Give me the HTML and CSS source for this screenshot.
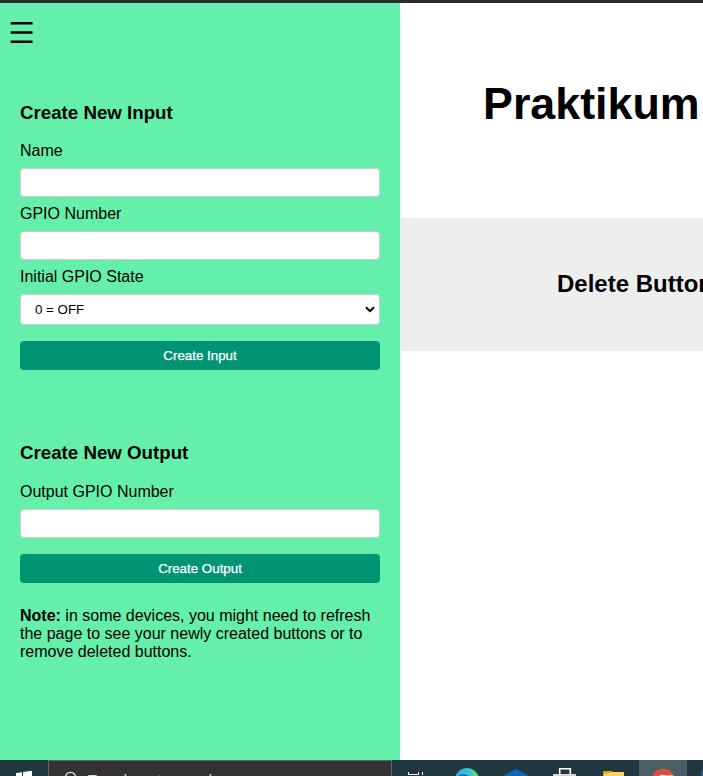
FILE: index.html
```html
<!DOCTYPE html>
<html lang="en">
<head>
<meta charset="utf-8">
<title>Praktikum</title>
<link rel="stylesheet" href="styles.css">
</head>
<body>
<div class="browser-edge"></div>
<div class="page">
  <aside class="sidebar">
    <button class="menu" aria-label="Menu">
      <svg width="24" height="24" viewBox="0 0 24 24"><path d="M.7 2.3h21.8M.7 11.5h21.8M.7 20.7h21.8" stroke="#000" stroke-width="2.5"/></svg>
    </button>
    <form class="form">
      <h3>Create New Input</h3>
      <label for="name">Name</label>
      <input type="text" id="name">
      <label for="gpio">GPIO Number</label>
      <input type="text" id="gpio">
      <label for="state">Initial GPIO State</label>
      <div class="select" id="state">
        <span>0 = OFF</span>
        <svg width="10" height="7" viewBox="0 0 10 7"><path d="M1 1.2l4 4 4-4" fill="none" stroke="#000" stroke-width="2"/></svg>
      </div>
      <button type="button" class="submit">Create Input</button>
    </form>
    <form class="form output">
      <h3>Create New Output</h3>
      <label for="out">Output GPIO Number</label>
      <input type="text" id="out">
      <button type="button" class="submit">Create Output</button>
      <p><b>Note:</b> in some devices, you might need to refresh the page to see your newly created buttons or to remove deleted buttons.</p>
    </form>
  </aside>
  <main class="main">
    <h1>Praktikum</h1>
    <section class="panel"><h2>Delete Button</h2></section>
  </main>
</div>
<footer class="taskbar">
  <div class="start"><svg width="48" height="16" viewBox="0 0 48 16"><path d="M16 13.1l6-.9V16h-6zM23 12l9-1.3V16h-9z" fill="#fff"/></svg></div>
  <div class="search">
    <svg width="14" height="15" viewBox="0 0 14 15"><circle cx="7.5" cy="16.4" r="5.1" fill="none" stroke="#e6e6e6" stroke-width="1.2"/></svg>
    <span>Type here to search</span>
  </div>
  <svg class="apps" width="311" height="16" viewBox="0 0 311 16">
    <defs>
      <linearGradient id="edge"><stop offset="0" stop-color="#28aee8"/><stop offset=".6" stop-color="#32c7d4"/><stop offset="1" stop-color="#66e34f"/></linearGradient>
    </defs>
    <path d="M16.5 12v2.5h10V12M30.5 12v3" fill="none" stroke="#fff"/>
    <circle cx="75" cy="20" r="12" fill="url(#edge)"/>
    <path d="M66 16q5-4 11 0z" fill="#0872bd"/>
    <path d="M111 16l13-7.2L137 16z" fill="#0b65b9"/>
    <path d="M161 14h23v2h-23z" fill="#d5d5d5"/>
    <path d="M167.7 15V8.7h10.6V15" fill="none" stroke="#fff" stroke-width="1.6"/>
    <path d="M211 11h9l1.5 1.5V16H211z" fill="#e49b0b"/><path d="M212 14l9-2h11v4h-20z" fill="#ffd45e"/>
    <path d="M247 0h48v16h-48z" fill="#4d5d66"/>
    <circle cx="271" cy="20" r="11.3" fill="#df4b3e"/>
    <path d="M267 16q3-2 5-1h8l1 1z" fill="#fff"/><path d="M273 15h8l.5 1H274z" fill="#f8c24d"/>
    <path d="M309 11h2v5h-2z" fill="#2457a5"/>
  </svg>
</footer>
</body>
</html>
```

FILE: styles.css
```css
* { box-sizing: border-box; }

body {
  margin: 0;
  width: 703px;
  height: 776px;
  overflow: hidden;
  font: 16px/18px "Liberation Sans", Arial, sans-serif;
  color: #000;
  background: #fff;
}

.browser-edge { height: 3px; background: #2b2b2b; }

.page { display: flex; height: 757px; overflow: hidden; }

.sidebar {
  flex: 0 0 400px;
  background: #64f0aa;
}

.menu {
  display: block;
  margin: 18px 0 0 10px;
  padding: 0;
  border: 0;
  width: 24px;
  height: 24px;
  background: none;
}

.menu svg { display: block; }

.form { margin: 57px 20px 0; }

.form.output { margin-top: 72px; }

h3 {
  margin: 0 0 19px;
  font-size: 18.72px;
  line-height: 21px;
}

.output h3 { margin-bottom: 20px; }

label { display: block; height: 18px; }

input, .select {
  display: block;
  width: 100%;
  height: 29px;
  margin: 8px 0;
  border: 1px solid #ccc;
  border-radius: 4px;
  background: #fff;
}

.select {
  display: flex;
  align-items: center;
  justify-content: space-between;
  height: 31px;
  padding: 0 4px 0 14px;
  font-size: 13.333px;
}

.submit {
  display: block;
  width: 100%;
  height: 29px;
  margin: 16px 0 0;
  padding: 0;
  border: 0;
  border-radius: 4px;
  background: #009473;
  color: #fff;
  font: 13.333px "Liberation Sans", Arial, sans-serif;
  -webkit-text-stroke: .25px #fff;
}

p { margin: 24px 0 0; }

.main { flex: 1; min-width: 0; overflow: hidden; white-space: nowrap; }

h1 {
  margin: 74px 0 0 83px;
  font-size: 44.8px;
  line-height: 52px;
}

.panel {
  height: 133px;
  margin-top: 89px;
  padding: 52px 0 0 157px;
  background: #eee;
}

h2 { margin: 0; font-size: 24px; line-height: 28px; }

.taskbar {
  display: flex;
  height: 16px;
  overflow: hidden;
  background: #203740;
}

.start { width: 48px; }

.start svg, .apps { display: block; }

.search {
  display: flex;
  align-items: flex-start;
  width: 344px;
  height: 30px;
  padding-left: 14px;
  border: 1px solid #626262;
  background: #333;
  color: #ddd;
  font-size: 14.6px;
}

.search span { margin: 10px 0 0 11px; white-space: nowrap; }
```
